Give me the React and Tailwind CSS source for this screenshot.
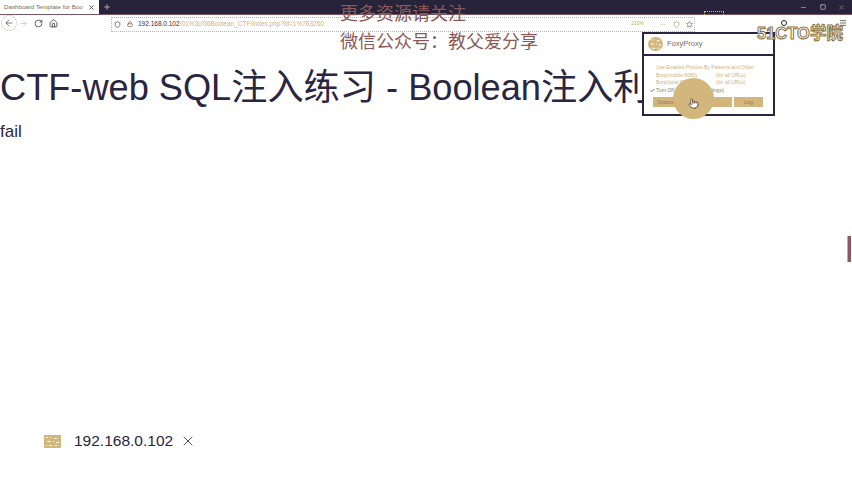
import React from 'react';
import { ArrowLeft, ArrowRight, RotateCw, Home, Shield, Lock, X, Plus, Minus, Square, Star, Menu, Check, Pointer } from 'lucide-react';

const font = { sans: 'font-["Liberation_Sans","Noto_Sans_CJK_SC",sans-serif]' };

const Dither = ({ className }) => (
  <svg className={className} viewBox="0 0 17 13" preserveAspectRatio="none">
    <rect width="17" height="13" fill="#d3b67c" />
    <path d="M2 2h2v1H2zM6 2h1v1H6zM10 3h3v1h-3zM3 6h4v1H3zM9 6h1v1H9zM12 7h3v1h-3zM2 10h1v1H2zM5 10h3v1H5zM11 10h2v1h-2z" fill="#fff" />
  </svg>
);

const TabBar = () => (
  <div className="flex h-[15px] w-full items-stretch border-b border-[#7a5560] bg-[#26233a]">
    <div className="flex w-[99px] items-center justify-between bg-white pl-1 pr-[4px]">
      <span className="whitespace-nowrap text-[6.2px] text-[#7d6a58]">Dashboard Template for Boo</span>
      <X size={7} className="shrink-0 text-[#5c3f4a]" strokeWidth={3} />
    </div>
    <div className="flex w-[16px] items-center justify-center">
      <Plus size={8} className="text-[#c9a09a]" strokeWidth={3} />
    </div>
    <div className="flex-1" />
    <div className="mr-[76px] mt-[11px] h-[4px] w-[20px] border-x border-t border-dotted border-[#d3b67c]" />
    <div className="flex w-[52px] items-center justify-between pr-[7px]">
      <Minus size={7} className="text-[#a78a90]" strokeWidth={3} />
      <Square size={6} className="text-[#c9b9b0]" strokeWidth={3} />
      <X size={7} className="text-[#8a6f78]" strokeWidth={3} />
    </div>
  </div>
);

const Toolbar = () => (
  <div className="flex h-[16px] w-full items-center text-[#3a2e3e]">
    <div className="ml-[1px] flex h-[16px] w-[16px] items-center justify-center rounded-full border border-dotted border-[#d0b37a]">
      <ArrowLeft size={10} strokeWidth={1.5} />
    </div>
    <ArrowRight size={9} strokeWidth={1.5} className="ml-[2px] text-[#d0b37a]" />
    <RotateCw size={9} strokeWidth={2} className="ml-[6px]" />
    <Home size={9} strokeWidth={2} className="ml-[6px]" />
    <div className="ml-[53px] mt-[2px] flex h-[15px] w-[584px] items-center border border-dotted border-[#d0b37a] pl-[2px]">
      <Shield size={7} strokeWidth={2.5} className="text-[#5c4a3e]" />
      <Lock size={6} strokeWidth={2.5} className="ml-[6px] text-[#7a5560]" />
      <span className="ml-[5px] whitespace-nowrap text-[6.5px] leading-none text-[#3a2e3e]">192.168.0.102</span>
      <span className="whitespace-nowrap text-[6.5px] leading-none text-[#d0b37a]">/01%3c/06Boolean_CTF/index.php?id=1%763260</span>
      <div className="flex-1" />
      <span className="mr-[16px] text-[5px] text-[#c9a86a]">210%</span>
      <span className="mr-[7px] text-[6px] leading-none text-[#5c4a3e]">···</span>
      <Shield size={7} strokeWidth={2.5} className="mr-[6px] text-[#b59a62]" />
      <Star size={7} strokeWidth={2.5} className="mr-[1px] text-[#8a6f48]" />
    </div>
    <div className="flex-1" />
    <Menu size={8} strokeWidth={2.5} className="mr-[5px] text-[#5c4a3e]" />
  </div>
);

const FoxyPopup = () => (
  <div className="absolute left-[642px] top-[32px] h-[84px] w-[133px] border-2 border-[#2a2540] bg-white">
    <div className="flex h-[22px] items-center border-b-2 border-[#2a2540] pl-[4px]">
      <Dither className="h-[14px] w-[15px] rounded-full" />
      <span className="ml-[4px] text-[7.5px] text-[#7a6a55]">FoxyProxy</span>
    </div>
    <div className="pl-[12px] pt-[8px] text-[5px] leading-[7.5px] text-[#d0b37a]">
      <div className="whitespace-nowrap">Use Enabled Proxies By Patterns and Order</div>
      <div className="flex whitespace-nowrap"><span className="w-[60px]">Burp(mobile 8080)</span><span>(for all URLs)</span></div>
      <div className="flex whitespace-nowrap"><span className="w-[60px]">Burp(local 8080)</span><span>(for all URLs)</span></div>
      <div className="relative whitespace-nowrap text-[#8a7a5c]">
        <Check size={5} strokeWidth={3} className="absolute -left-[6px] top-[1px] text-[#2a2540]" />
        Turn Off (Use Firefox Settings)
      </div>
    </div>
    <div className="ml-[9px] mt-[3px] flex gap-[2px] text-[5px] leading-[10px] text-[#8a7a5c]">
      <div className="h-[10px] w-[79px] bg-[#d3b67c] pl-[4px]">Options</div>
      <div className="h-[10px] w-[29px] bg-[#d3b67c] text-center">Log</div>
    </div>
  </div>
);

export default function App() {
  return (
    <div className={`relative h-[480px] w-[852px] overflow-hidden bg-white ${font.sans}`}>
      <TabBar />
      <Toolbar />
      <main className="text-[#2a2540]">
        <h1 className="mt-[35px] whitespace-nowrap text-[36.2px] leading-[44px] font-normal">CTF-web SQL注入练习 - Boolean注入利用</h1>
        <p className="mt-[13px] text-[17px] leading-[18px]">fail</p>
      </main>

      {/* video overlays */}
      <FoxyPopup />
      <div className="absolute left-[673px] top-[78px] flex h-[41px] w-[41px] items-center justify-center rounded-full bg-[#d3b67c] pt-[9px]">
        <Pointer size={11} strokeWidth={2} fill="#fff" className="text-[#5c4a3e]" />
      </div>
      <div className="absolute left-[340px] top-[3px] text-[18px] leading-[22px] text-[#8a5a58]">更多资源请关注</div>
      <div className="absolute left-[340px] top-[31px] text-[18px] leading-[22px] text-[#8a5a58]">微信公众号：教父爱分享</div>
      <div className="absolute left-[781px] top-[20px] h-[6px] w-[6px] rounded-full border border-[#2a2540]" />
      <div className="absolute left-[757px] top-[23px] whitespace-nowrap text-[16.5px] font-bold leading-[20px] text-white [-webkit-text-stroke:1px_#8a7040]">51CTO学院</div>
      <div className="absolute left-[847px] top-[236px] h-[26px] w-[4px] border-l border-[#d0b37a] bg-[#8a5a60]" />

      <div className="absolute left-[44px] top-[432px] flex items-center text-[#2a2540]">
        <Dither className="h-[13px] w-[17px]" />
        <span className="ml-[13px] text-[15.5px] leading-[18px]">192.168.0.102</span>
        <X size={16} strokeWidth={1.25} className="ml-[7px]" />
      </div>
    </div>
  );
}
